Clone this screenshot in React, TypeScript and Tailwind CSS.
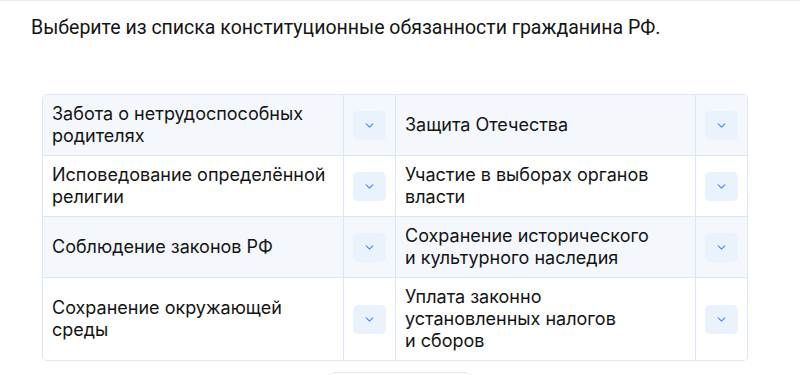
import { ChevronDown } from "lucide-react";

const rows: [string[], string[]][] = [
  [["Забота о нетрудоспособных", "родителях"], ["Защита Отечества"]],
  [["Исповедование определённой", "религии"], ["Участие в выборах органов", "власти"]],
  [["Соблюдение законов РФ"], ["Сохранение исторического", "и культурного наследия"]],
  [["Сохранение окружающей", "среды"], ["Уплата законно", "установленных налогов", "и сборов"]],
];

function Picker() {
  return (
    <div className="flex items-center justify-center border-l border-[#dbe7f9]">
      <button className="w-[33px] h-[29px] rounded-[5px] bg-[#eaf2fd] flex items-center justify-center text-[#4f95f2]">
        <ChevronDown size={13} strokeWidth={2.5} />
      </button>
    </div>
  );
}

function Cell({ lines, first }: { lines: string[]; first?: boolean }) {
  return (
    <div
      className={`flex flex-col justify-center px-[9px] py-[8px] text-[18px] leading-[22px] min-h-[60px] whitespace-nowrap ${first ? "" : "border-l border-[#dbe7f9]"}`}
    >
      {lines.map((l) => (
        <span key={l}>{l}</span>
      ))}
    </div>
  );
}

export default function App() {
  return (
    <div className="w-[800px] h-[375px] overflow-hidden bg-white border-t border-[#ededed] font-['Inter',sans-serif] text-[#141414]">
      <h1 className="pl-[31px] pt-[14px] text-[19.5px] leading-[26px] font-['Roboto',sans-serif]">
        Выберите из списка конституционные обязанности гражданина РФ.
      </h1>

      <div className="mx-[42px] mt-[53px] w-[706px] rounded-[5px] border border-[#dbe7f9] overflow-hidden">
        {rows.map(([a, b], i) => (
          <div
            key={i}
            className={`grid grid-cols-[300px_52px_300px_52px] ${i > 0 ? "border-t border-[#dbe7f9]" : ""} ${i % 2 === 0 ? "bg-[#f4f8fd]" : "bg-white"}`}
          >
            <Cell lines={a} first />
            <Picker />
            <Cell lines={b} />
            <Picker />
          </div>
        ))}
      </div>

      <div className="mx-auto mt-[11px] w-[140px] h-[40px] rounded-[5px] border border-[#dbe7f9] bg-white" />
    </div>
  );
}
